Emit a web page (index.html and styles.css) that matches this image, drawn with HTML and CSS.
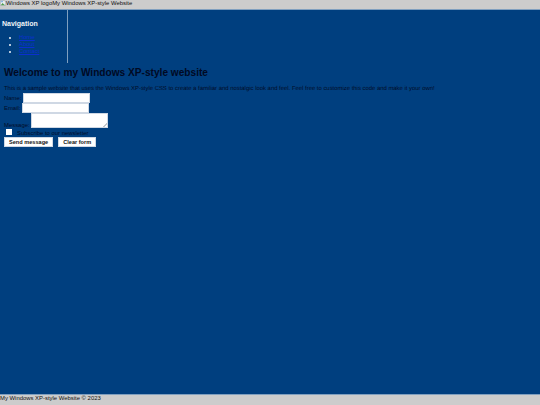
FILE: index.html
```html
<!DOCTYPE html>
<html lang="en">
<head>
    <meta charset="UTF-8">
    <meta name="viewport" content="width=device-width, initial-scale=1.0">
    <title>My Windows XP-style Website</title>
    <link rel="stylesheet" href="styles.css">
</head>
<body>
    <div class="wrap">
        <header class="top-bar">
            <svg class="broken-img" viewBox="0 0 8 8" width="6" height="6" aria-hidden="true">
                <path d="M0.5 0.5H5.5L7.5 2.5V7.5H0.5Z" fill="#e8eef0" stroke="#8c9498" stroke-width="0.6"/>
                <path d="M1 7L3.5 4L5 5.5L7 7Z" fill="#4d9a4a"/>
                <path d="M1 1H4V3H1Z" fill="#8fb6e0"/>
            </svg><span>Windows XP logo</span><span>My Windows XP-style Website</span>
        </header>
        <div class="page">
            <nav class="sidebar">
                <h2>Navigation</h2>
                <ul>
                    <li><a href="#">Home</a></li>
                    <li><a href="#">About</a></li>
                    <li><a href="#">Contact</a></li>
                </ul>
            </nav>
            <main class="content">
                <h1>Welcome to my Windows XP-style website</h1>
                <p>This is a sample website that uses the Windows XP-style CSS to create a familiar and nostalgic look and feel. Feel free to customize this code and make it your own!</p>
                <form>
                    <div class="field"><label>Name:</label><input type="text"></div>
                    <div class="field"><label>Email:</label><input type="text"></div>
                    <div class="field field-message"><label>Message:</label><textarea></textarea></div>
                    <div class="check"><input type="checkbox"><label>Subscribe to our newsletter</label></div>
                    <div class="buttons">
                        <button type="button">Send message</button>
                        <button type="button">Clear form</button>
                    </div>
                </form>
            </main>
        </div>
        <footer class="bottom-bar">My Windows XP-style Website © 2023</footer>
    </div>
</body>
</html>
```

FILE: styles.css
```css
html, body {
    height: 100%;
}
body {
    margin: 0;
    background: #003f7f;
    color: #000c28;
    font-family: "Liberation Sans", Arial, sans-serif;
    font-size: 5.92px;
}
.wrap {
    height: 100%;
    display: flex;
    flex-direction: column;
}
.top-bar {
    height: 10px;
    line-height: 7px;
    background: #cccccc;
    color: #111;
    border-bottom: 1px solid #7f9fbf;
    box-sizing: border-box;
    white-space: nowrap;
}
.broken-img {
    vertical-align: -1px;
}
.page {
    flex: 1;
}
.sidebar {
    width: 67px;
    height: 53px;
    border-right: 1px solid #7f9fbf;
    color: #eef3f8;
    overflow: hidden;
}
.sidebar h2 {
    margin: 9px 0 0 2px;
    font-size: 7px;
    line-height: 9px;
}
.sidebar ul {
    margin: 6px 0 0;
    padding-left: 19px;
}
.sidebar li {
    height: 7px;
    line-height: 7px;
}
.sidebar a {
    color: #0a2fd0;
}
.content {
    padding: 4px 4px 0;
}
h1 {
    margin: 0;
    font-size: 10.15px;
    line-height: 12px;
    color: #000a24;
}
.content p {
    margin: 7px 0 0;
    line-height: 7px;
    text-rendering: geometricPrecision;
}
.field {
    display: flex;
    align-items: center;
    gap: 1.6px;
}
.field-message {
    align-items: flex-end;
}
.field label {
    line-height: 6.5px;
}
input[type="text"], textarea {
    box-sizing: border-box;
    margin: 0;
    padding: 0;
    width: 66.5px;
    height: 10px;
    border: 1px solid #cfd8e4;
    background: #fff;
}
textarea {
    width: 76.5px;
    height: 15px;
    resize: none;
    background: linear-gradient(135deg, #fff 50%, #c4c8cc 50%, #c4c8cc 65%, #fff 65%) no-repeat right bottom / 4px 4px #fff;
}
.check {
    display: flex;
    align-items: center;
    height: 9px;
}
.check input {
    appearance: none;
    width: 5.5px;
    height: 6px;
    margin: -1px 5.5px 0 2px;
    background: #fff;
}
.buttons {
    display: flex;
    gap: 5px;
}
button {
    height: 10px;
    padding: 0 4px;
    border: 1px solid #cfd8e4;
    background: #fff;
    color: #111;
    font: bold 5.6px "Liberation Sans", Arial, sans-serif;
}
.bottom-bar {
    height: 11px;
    line-height: 7px;
    background: #cccccc;
    color: #111;
    border-top: 1px solid #7f9fbf;
    box-sizing: border-box;
}
```
